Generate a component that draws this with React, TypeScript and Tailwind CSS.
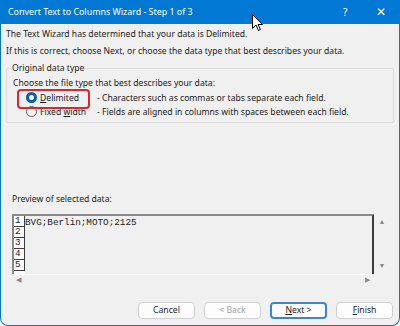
import React from "react";

const font = { fontFamily: '"Noto Sans", "Open Sans", sans-serif' };
const mono = { fontFamily: '"Liberation Mono", monospace' };

function Radio({ checked }: { checked?: boolean }) {
  return checked ? (
    <span className="flex h-[11px] w-[11px] items-center justify-center rounded-full bg-[#005fb8]">
      <span className="h-[5px] w-[5px] rounded-full bg-white" />
    </span>
  ) : (
    <span className="h-[11px] w-[11px] rounded-full border border-[#5a5a5a] bg-[#f7f7f7]" />
  );
}

function Btn({
  children,
  disabled,
  focused,
}: {
  children: React.ReactNode;
  disabled?: boolean;
  focused?: boolean;
}) {
  return (
    <button
      type="button"
      className={[
        "flex h-[17px] w-[57px] items-center justify-center rounded-[4px] bg-[#fdfdfd] text-[8.6px] leading-none",
        focused ? "border-2 border-[#3a86d6]" : "border border-[#d0d0d0]",
        disabled ? "text-[#a3a3a3]" : "text-[#1b1b1b]",
      ].join(" ")}
    >
      {children}
    </button>
  );
}

export default function App() {
  const rows = [1, 2, 3, 4, 5];

  return (
    <div className="relative h-[326px] w-[400px] overflow-hidden text-[#1b1b1b]" style={font}>
      {/* title bar */}
      <div className="flex h-[24px] items-center bg-[#0078d4] pl-[8px] text-[8.9px] text-white">
        <span className="flex-1">Convert Text to Columns Wizard - Step 1 of 3</span>
        <span className="w-[33px] text-[10px]">?</span>
        <span className="mr-[14px] text-[12px] font-light leading-none">✕</span>
      </div>

      {/* body */}
      <div className="flex h-[302px] flex-col rounded-b-[8px] border-x border-b border-[#0078d4] bg-[#f0f0f0] px-[5px] text-[8.6px]">
        <p className="mt-[2px] leading-[17px]">The Text Wizard has determined that your data is Delimited.</p>
        <p className="leading-[17px]">If this is correct, choose Next, or choose the data type that best describes your data.</p>

        {/* group */}
        <div className="relative mt-[8px] h-[55px] rounded-[2px] border border-[#dcdcdc] px-[6px] pt-[7px]">
          <span className="absolute -top-[8px] left-[4px] bg-[#f0f0f0] px-[1px] leading-[15px]">Original data type</span>
          <p className="leading-[15px]">Choose the file type that best describes your data:</p>
          <div className="flex h-[14px] items-center">
            <div className="relative flex w-[84px] items-center gap-[3px] pl-[13px]">
              <span className="absolute -top-[3px] left-[4px] h-[20px] w-[73px] rounded-[4px] border-2 border-[#e0262b]" />
              <Radio checked />
              <span>
                <span className="underline">D</span>elimited
              </span>
            </div>
            <span>- Characters such as commas or tabs separate each field.</span>
          </div>
          <div className="flex h-[14px] items-center">
            <div className="flex w-[84px] items-center gap-[3px] pl-[13px]">
              <Radio />
              <span>
                Fixed <span className="underline">w</span>idth
              </span>
            </div>
            <span>- Fields are aligned in columns with spaces between each field.</span>
          </div>
        </div>

        <p className="mt-[69px] pl-[6px] leading-[15px]">Preview of selected data:</p>

        {/* preview */}
        <div className="ml-[6px] mt-[7px] flex">
          <div className="flex flex-col">
            <div className="flex h-[60px] w-[362px] border-l-2 border-r-2 border-t-2 border-[#3c3c3c] border-l-[#8a8a8a] border-t-[#8a8a8a]">
              <div className="flex w-[11px] flex-col bg-white">
                {rows.map((n) => (
                  <div
                    key={n}
                    className="flex h-[11px] items-end border-b border-r border-[#3c3c3c] pl-[1px] text-[9.3px] leading-[10px]"
                    style={mono}
                  >
                    {n}
                  </div>
                ))}
              </div>
              <div className="flex-1 pt-[2px] text-[9.3px] leading-[10px]" style={mono}>
                BVG;Berlin;MOTO;2125
              </div>
            </div>
            <div className="flex h-[12px] items-center justify-between border-t border-white px-[4px] text-[7px] text-[#8a8a8a]">
              <span>◀</span>
              <span>▶</span>
            </div>
          </div>
          <div className="flex h-[60px] w-[16px] flex-col items-center justify-between py-[3px] text-[7px] text-[#8a8a8a]">
            <span>▲</span>
            <span>▼</span>
          </div>
        </div>

        {/* buttons */}
        <div className="mt-[16px] flex justify-end gap-[9px] pr-[1px]">
          <Btn>Cancel</Btn>
          <Btn disabled>&lt; Back</Btn>
          <Btn focused>
            <span className="underline">N</span>ext &gt;
          </Btn>
          <Btn>
            <span className="underline">F</span>inish
          </Btn>
        </div>
      </div>

      {/* mouse cursor */}
      <svg className="absolute left-[252px] top-[14px]" width="12" height="18" viewBox="0 0 12 18">
        <path d="M0.5 0.5 L0.5 14.5 L4 11 L6.5 16.5 L8.5 15.5 L6 10.5 L10.5 10.5 Z" fill="#fff" stroke="#000" strokeWidth="1" />
      </svg>
    </div>
  );
}
